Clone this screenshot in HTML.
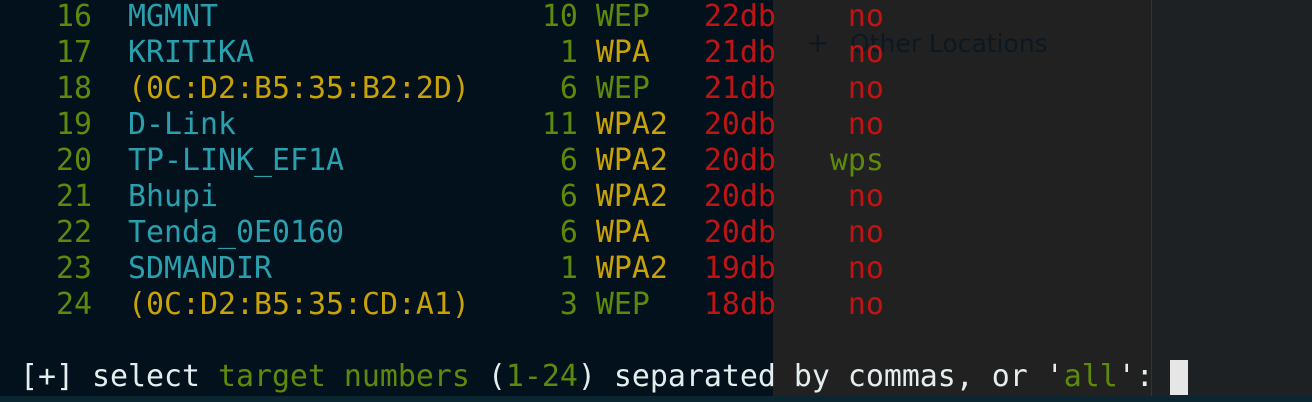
<!DOCTYPE html>
<html><head><style>
html,body{margin:0;padding:0;width:1312px;height:402px;overflow:hidden;background:#03111c;}
pre{position:absolute;left:20px;top:-1px;margin:0;font-family:"DejaVu Sans Mono","Liberation Mono",monospace;font-size:29.9px;line-height:36px;color:#e4eeee;letter-spacing:0;}
.g{color:#5e8a0c}.c{color:#2a9fae}.y{color:#c9a208}.r{color:#c01414}
#ov{position:absolute;left:773px;top:0;width:378px;height:396px;background:rgba(34,34,34,0.97);}
#ov2{position:absolute;left:1151px;top:0;width:161px;height:396px;background:#1d2124;border-left:1px solid #2a3540;}
#pl{position:absolute;left:806px;top:26px;font-family:"DejaVu Sans","Liberation Sans",sans-serif;font-size:28px;color:#0c1822;}
#ol{position:absolute;left:850px;top:29px;font-family:"DejaVu Sans","Liberation Sans",sans-serif;font-size:25px;color:#0c1822;}
#bl{position:absolute;left:0;top:396px;width:1312px;height:6px;background:#0b2630;}
#cur{position:absolute;left:1170px;top:360px;width:18px;height:35px;background:#e6e6e6;}
</style></head><body>
<div id="ov"></div><div id="ov2"></div>
<div id="pl">+</div>
<div id="ol">Other Locations</div>
<div id="bl"></div>
<pre>  <span class="g">16</span>  <span class="c">MGMNT</span>                  <span class="g">10</span> <span class="g">WEP</span>   <span class="r">22db</span>    <span class="r">no</span>
  <span class="g">17</span>  <span class="c">KRITIKA</span>                 <span class="g">1</span> <span class="y">WPA</span>   <span class="r">21db</span>    <span class="r">no</span>
  <span class="g">18</span>  <span class="y">(0C:D2:B5:35:B2:2D)</span>     <span class="g">6</span> <span class="g">WEP</span>   <span class="r">21db</span>    <span class="r">no</span>
  <span class="g">19</span>  <span class="c">D-Link</span>                 <span class="g">11</span> <span class="y">WPA2</span>  <span class="r">20db</span>    <span class="r">no</span>
  <span class="g">20</span>  <span class="c">TP-LINK_EF1A</span>            <span class="g">6</span> <span class="y">WPA2</span>  <span class="r">20db</span>   <span class="g">wps</span>
  <span class="g">21</span>  <span class="c">Bhupi</span>                   <span class="g">6</span> <span class="y">WPA2</span>  <span class="r">20db</span>    <span class="r">no</span>
  <span class="g">22</span>  <span class="c">Tenda_0E0160</span>            <span class="g">6</span> <span class="y">WPA</span>   <span class="r">20db</span>    <span class="r">no</span>
  <span class="g">23</span>  <span class="c">SDMANDIR</span>                <span class="g">1</span> <span class="y">WPA2</span>  <span class="r">19db</span>    <span class="r">no</span>
  <span class="g">24</span>  <span class="y">(0C:D2:B5:35:CD:A1)</span>     <span class="g">3</span> <span class="g">WEP</span>   <span class="r">18db</span>    <span class="r">no</span>

[+] select <span class="g">target numbers</span> (<span class="g">1-24</span>) separated by commas, or '<span class="g">all</span>': </pre>
<div id="cur"></div>
</body></html>
